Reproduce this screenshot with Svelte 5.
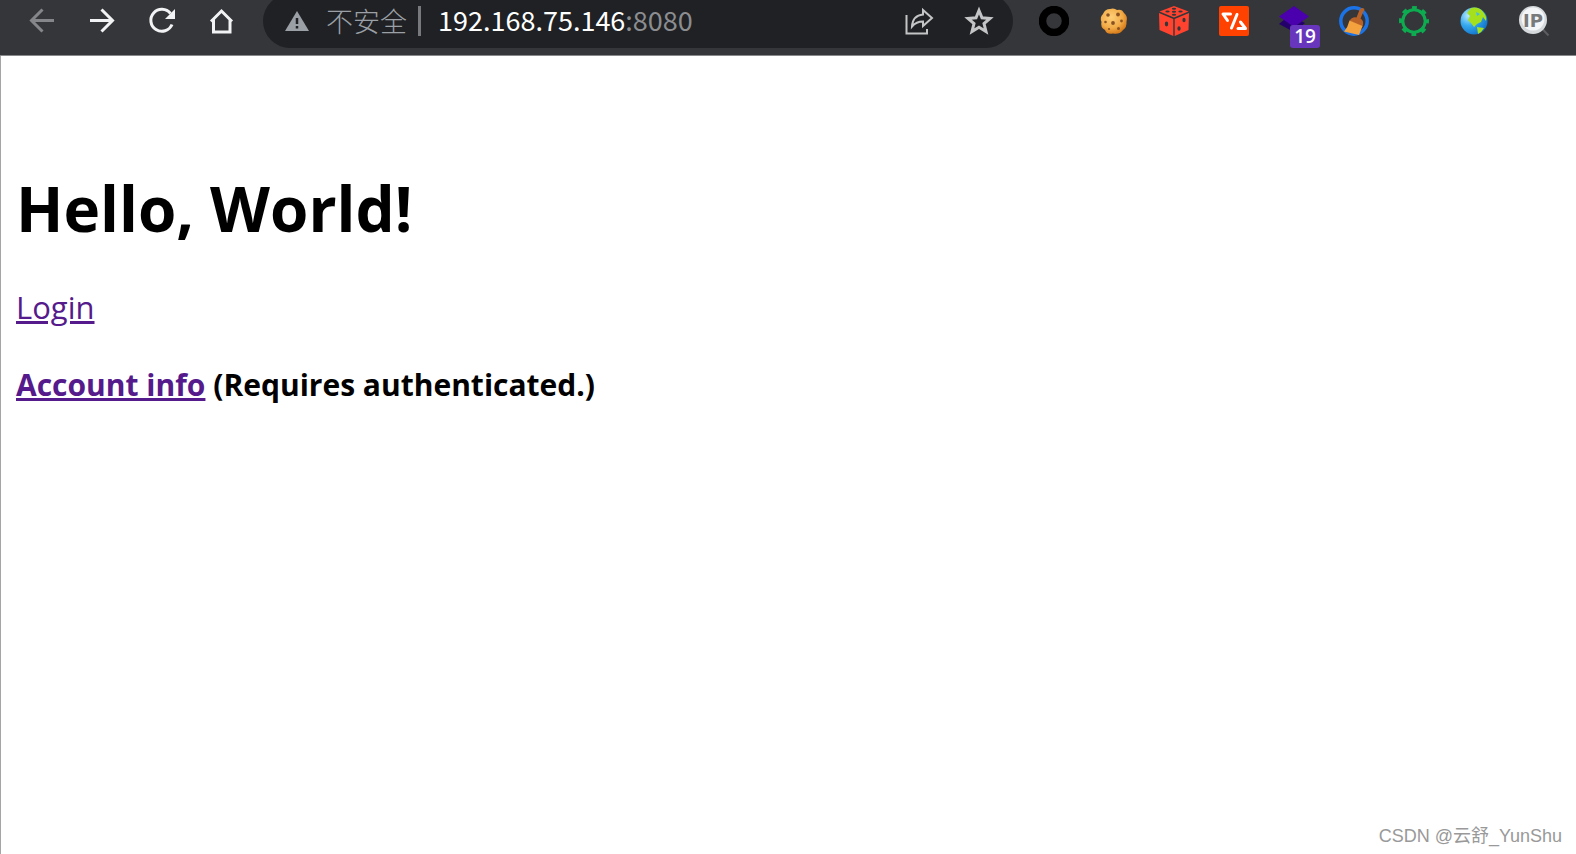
<script>
    let host = '192.168.75.146';
    let port = ':8080';
    let blocked = 19; // Number shown on the extension badge
</script>

<div class="window">
    <header class="toolbar">
        <nav class="buttons" aria-label="Navigation">
            <button type="button" class="dim" aria-label="Back" disabled>
                <svg viewBox="0 0 30 30"><path d="M27 14.5H5M15.500 3.500L4.500 14.500L15.500 25.500" /></svg>
            </button>
            <button type="button" aria-label="Forward">
                <svg viewBox="0 0 30 30"><path d="M3 14.500H25M14.500 3.500L25.500 14.500L14.500 25.500" /></svg>
            </button>
            <button type="button" aria-label="Reload">
                <svg viewBox="0 0 30 30">
                    <path d="M23.500 7.500A11 11 0 1 0 25 18.500" />
                    <path class="fill" d="M28 3V13H18Z" />
                </svg>
            </button>
            <button type="button" aria-label="Home">
                <svg viewBox="0 0 30 30"><path d="M4 15.500L14.500 5L25 15.500M6.500 13.500V26H23V13.500" /></svg>
            </button>
        </nav>

        <div class="omnibox">
            <svg class="warning" viewBox="0 0 24 24">
                <path fill="#9aa0a6" d="M12 2L24 22H0Z" />
                <path stroke="#202124" stroke-width="2.500" d="M12 9V15M12 17V19.500" />
            </svg>
            <span class="security">不安全</span>
            <span class="divider"></span>
            <input class="host" type="text" aria-label="Host" bind:value={host} />
            <input class="port" type="text" aria-label="Port" bind:value={port} />
            <div class="actions">
                <button type="button" aria-label="Share">
                    <svg viewBox="0 0 30 30">
                        <path d="M2.500 9V27.500H23V23" />
                        <path d="M8 20.500C8.500 13 12.500 9 19 8.500V4L28 12L19 20V15.500C14 15.500 11 17 8 20.500Z" />
                    </svg>
                </button>
                <button type="button" aria-label="Bookmark">
                    <svg viewBox="0 0 30 30"><path class="thick" d="M15 4.500L18 11.800L26 12.400L20 17.600L22 25.500L15 21.300L8 25.500L10 17.600L4 12.400L12 11.800Z" /></svg>
                </button>
            </div>
        </div>

        <div class="buttons extensions">
            <button type="button" aria-label="Ring">
                <svg viewBox="0 0 30 30"><circle cx="15" cy="15" r="11.500" stroke="#000" stroke-width="7.500" /></svg>
            </button>
            <button type="button" aria-label="Cookies">
                <svg viewBox="0 0 30 30">
                    <defs>
                        <radialGradient id="cookie" cx="0.4" cy="0.35" r="0.65">
                            <stop offset="0" stop-color="#ffcf78" />
                            <stop offset="0.65" stop-color="#f2ac48" />
                            <stop offset="1" stop-color="#d97d1b" />
                        </radialGradient>
                    </defs>
                    <path fill="url(#cookie)" stroke="none" d="M11 3Q15 1.500 18 4Q23 2.500 25 7Q29 10 27.500 16Q28 21 24 24Q20 29 14 27.500Q8 29 6 24Q1 21 2.500 16Q0.500 11 4 8Q6 3 11 3Z" />
                    <g fill="#8a5222" stroke="none">
                        <circle cx="9" cy="9" r="1.800" /><circle cx="19" cy="8.500" r="1.900" />
                        <circle cx="6.500" cy="16" r="1.300" /><circle cx="14" cy="17" r="1.900" />
                        <circle cx="22.500" cy="15" r="1.400" /><circle cx="19.500" cy="22.500" r="1.500" />
                        <circle cx="10" cy="23" r="1.100" />
                    </g>
                </svg>
            </button>
            <button type="button" aria-label="Dice">
                <svg viewBox="0 0 30 30">
                    <path fill="#ff432e" stroke="none" d="M15 0L29.500 5.500L15 11.500L0.500 5.500ZM0 7L14.300 13V30L0.500 24ZM30 7L15.700 13V30L29.500 24Z" />
                    <g fill="#35363a" stroke="none">
                        <ellipse cx="15" cy="2.800" rx="2.200" ry="1" /><ellipse cx="8.500" cy="5.500" rx="2.200" ry="1" />
                        <ellipse cx="15" cy="5.700" rx="2.200" ry="1" /><ellipse cx="21.500" cy="5.500" rx="2.200" ry="1" />
                        <ellipse cx="15" cy="8.700" rx="2.200" ry="1" /><ellipse cx="7.500" cy="18" rx="1.700" ry="2.400" />
                        <ellipse cx="25" cy="14" rx="1.600" ry="2.300" /><ellipse cx="20" cy="22.500" rx="1.600" ry="2.300" />
                    </g>
                </svg>
            </button>
            <button type="button" aria-label="Code">
                <svg viewBox="0 0 30 30">
                    <rect width="30" height="30" rx="2" fill="#ff4200" stroke="none" />
                    <path stroke="#fff" stroke-width="3" stroke-linecap="round" stroke-linejoin="round" d="M11.500 8H4L8.500 14.500M18 8.500L12.500 22M19 22.500H26.500L21.500 16" />
                </svg>
            </button>
            <button type="button" class="badged" aria-label="Layers">
                <svg viewBox="0 0 30 30">
                    <path fill="#24006b" stroke="none" d="M6 13L15 11L26 17L15 26L0 18Z" />
                    <path fill="#4a00ad" stroke="none" d="M15 0L30 10.500L15 21L0 10.500Z" />
                </svg>
                <span class="badge">{blocked}</span>
            </button>
            <button type="button" aria-label="Cleaner">
                <svg viewBox="0 0 30 30">
                    <circle cx="15" cy="15" r="13.200" stroke="#1b73e8" stroke-width="3.500" />
                    <path fill="#b96228" stroke="none" d="M20.500 4Q22.500 0.500 25.500 3L21.500 12.500Q25.500 15 23.500 20.500L10.500 15Q13 10.500 17.500 11.500Z" />
                    <path fill="#f3a23e" stroke="none" d="M10.500 14.500L23.500 20L20 29L5 25.500Q9 21 10.500 14.500Z" />
                </svg>
            </button>
            <button type="button" aria-label="Settings">
                <svg viewBox="0 0 30 30">
                    <circle cx="15" cy="15" r="11.200" stroke="#0dac50" stroke-width="3" />
                    <circle cx="15" cy="15" r="13.400" stroke="#0dac50" stroke-width="3.200" stroke-dasharray="4.800 5.724" stroke-dashoffset="2.400" />
                </svg>
            </button>
            <button type="button" aria-label="Globe">
                <svg viewBox="0 0 30 30">
                    <defs>
                        <radialGradient id="ocean" cx="0.3" cy="0.3" r="0.75">
                            <stop offset="0" stop-color="#b9eaff" />
                            <stop offset="0.5" stop-color="#36a9ee" />
                            <stop offset="1" stop-color="#1276cb" />
                        </radialGradient>
                    </defs>
                    <circle cx="15" cy="15" r="13.500" fill="url(#ocean)" stroke="none" />
                    <path fill="#a4e01b" stroke="none" d="M12 2Q20 0 25 7Q28 11 27 15L24 11L22 16L18 18L15 21L12 17L9 14L11 10L8 7Z" />
                    <path fill="#a4e01b" stroke="none" d="M18 21L25 22Q23 26 19 28Z" />
                    <path fill="#43b8ee" stroke="none" d="M17 6L21 8L18 10Z" />
                </svg>
            </button>
            <button type="button" aria-label="IP lookup">
                <svg viewBox="0 0 30 30">
                    <path stroke="#5c5d60" stroke-width="2" d="M23 22.500L29.500 29.500" />
                    <circle cx="14" cy="14" r="14" fill="#d5d9dc" stroke="none" />
                    <circle cx="14" cy="13" r="11.500" fill="#f3f5f6" stroke="none" />
                    <text x="14" y="21" text-anchor="middle">IP</text>
                </svg>
            </button>
        </div>
    </header>

    <main>
        <h1>Hello, World!</h1>
        <p><a href="/login">Login</a></p>
        <h4><a href="/account">Account info</a> (Requires authenticated.)</h4>
    </main>

    <div class="watermark">CSDN @云舒_YunShu</div>
</div>

<style>
    :global(body) {
        margin: 0;
        background-color: #ffffff;
    }

    .window {
        position: relative;
        display: flex;
        flex-direction: column;
        min-height: 100vh;
        font-family: "Open Sans", "Noto Sans CJK SC", sans-serif;
    }

    /* Browser toolbar */
    .toolbar {
        display: flex;
        align-items: flex-start;
        gap: 11px;
        height: 55px;
        padding: 0 12px;
        overflow: hidden;
        background-color: #35363a;
        border-bottom: 1px solid #88898b;
    }

    .buttons {
        display: flex;
    }

    button {
        display: flex;
        align-items: center;
        justify-content: center;
        width: 60px;
        height: 42px;
        padding: 0;
        border: none;
        background: none;
        color: #f1f3f4;
        font-family: inherit;
        cursor: pointer;
    }

    button.dim {
        color: #85868a;
    }

    svg {
        width: 30px;
        height: 30px;
        fill: none;
        stroke: currentColor;
        stroke-width: 3;
    }

    svg .fill {
        fill: currentColor;
        stroke: none;
    }

    /* Address bar, its top edge is cut by the window */
    .omnibox {
        display: flex;
        flex: 1;
        align-items: center;
        min-width: 0;
        height: 54px;
        margin-top: -6px;
        padding: 0 4px 0 22px;
        box-sizing: border-box;
        border-radius: 27px;
        background-color: #202124;
        color: #9aa0a6;
        font-family: "Noto Sans CJK SC", sans-serif;
        font-size: 27px;
    }

    .warning {
        width: 24px;
        height: 24px;
        stroke: none;
    }

    .security {
        margin-left: 17px;
        font-weight: 300;
        line-height: 40px;
        white-space: nowrap;
    }

    .divider {
        width: 3px;
        height: 30px;
        margin: 0 17px 0 11px;
        background-color: #77797c;
    }

    input {
        field-sizing: content;
        height: 44px;
        padding: 0 0 4px;
        box-sizing: border-box;
        border: none;
        outline: none;
        background: none;
        font: inherit;
    }

    .host {
        color: #ffffff;
    }

    .port {
        color: #8b8d90;
    }

    .actions {
        display: flex;
        margin-left: auto;
    }

    .actions button {
        color: #c4c5c6;
    }

    .actions svg {
        stroke-width: 2;
    }

    .actions .thick {
        stroke-width: 3;
    }

    /* Extension icons */
    .badged {
        position: relative;
    }

    .badge {
        position: absolute;
        top: 25px;
        left: 26px;
        width: 30px;
        border-radius: 3px;
        background-color: #6836bd;
        color: #ffffff;
        font-size: 19px;
        font-weight: 600;
        line-height: 23px;
        text-align: center;
    }

    text {
        fill: #77797b;
        stroke: none;
        font-family: "DejaVu Sans", sans-serif;
        font-size: 18px;
        font-weight: bold;
    }

    /* Page content */
    main {
        flex: 1;
        padding: 110px 15px 16px;
        border-left: 1px solid #a5a5a5;
        color: #000000;
        font-size: 31px;
        line-height: 42px;
    }

    h1,
    h4,
    p {
        margin: 0 0 36px;
    }

    h1 {
        font-size: 62px;
        line-height: 84px;
    }

    h4 {
        font-size: 30px;
    }

    a {
        color: #551a8b;
    }

    .watermark {
        position: absolute;
        right: 14px;
        bottom: 6px;
        color: #999999;
        font-family: "Liberation Sans", "Noto Sans CJK SC", sans-serif;
        font-size: 18px;
        line-height: 24px;
    }
</style>
